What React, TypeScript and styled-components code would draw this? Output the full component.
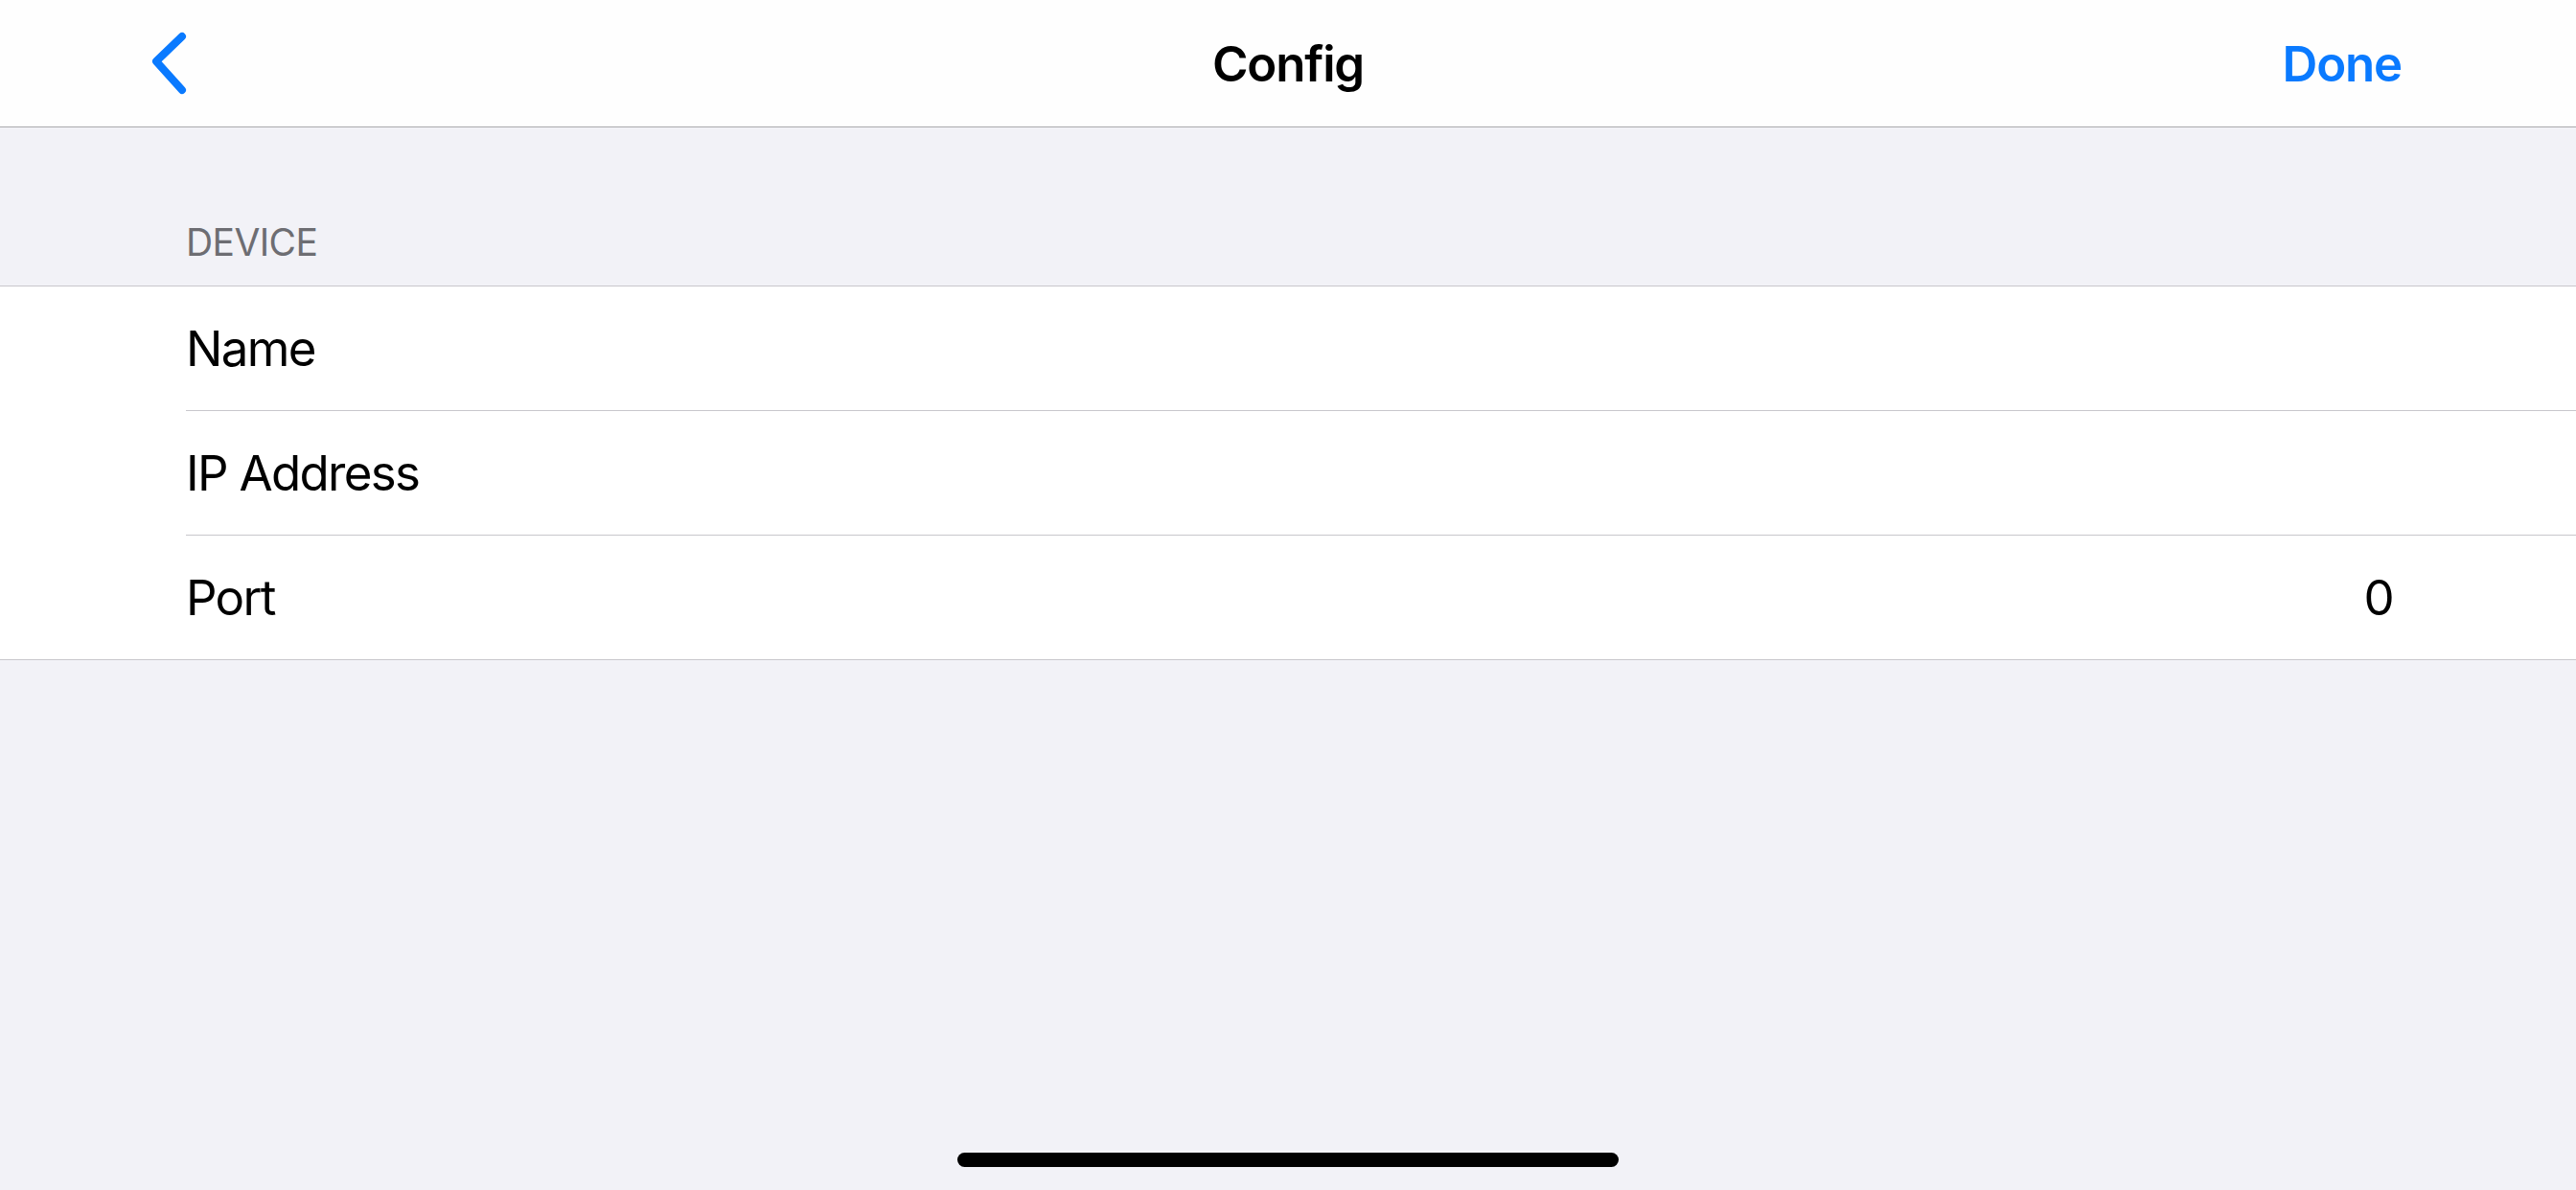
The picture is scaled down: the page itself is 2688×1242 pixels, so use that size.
import styled, { createGlobalStyle } from "styled-components";

const GlobalStyle = createGlobalStyle`
  html, body {
    margin: 0;
    padding: 0;
    background-color: #f2f2f7;
  }
  body {
    font-family: "Inter", "Liberation Sans", sans-serif;
    -webkit-font-smoothing: antialiased;
  }
`;

const Screen = styled.div`
  display: flex;
  flex-direction: column;
  min-height: 100vh;
  background-color: #f2f2f7;
`;

const NavBar = styled.header`
  display: grid;
  grid-template-columns: 1fr auto 1fr;
  align-items: center;
  height: 132px;
  background-color: #fefefe;
  border-bottom: 1px solid #a9a9ad;
`;

const BackButton = styled.button`
  justify-self: start;
  display: flex;
  align-items: center;
  border: none;
  background: none;
  padding: 0 0 0 154px;
  cursor: pointer;
`;

const Title = styled.h1`
  margin: 0;
  font-size: 51px;
  font-weight: 600;
  letter-spacing: -1.2px;
  color: #000;
`;

const DoneButton = styled.button`
  justify-self: end;
  border: none;
  background: none;
  padding: 0 182px 0 0;
  font-family: inherit;
  font-size: 51px;
  font-weight: 600;
  letter-spacing: -1.2px;
  color: #0a7aff;
  cursor: pointer;
`;

const SectionHeader = styled.div`
  padding: 96px 0 22px 194px;
  font-size: 39px;
  line-height: 47px;
  letter-spacing: -0.6px;
  text-transform: uppercase;
  color: #6d6d72;
`;

const Group = styled.div`
  display: flex;
  flex-direction: column;
  background-color: #fff;
  border-top: 1px solid #c8c7cc;
  border-bottom: 1px solid #c8c7cc;
`;

const Row = styled.div`
  padding-left: 194px;
  &:not(:last-child) > div {
    border-bottom: 1px solid #c8c7cc;
  }
`;

const RowInner = styled.div`
  display: flex;
  align-items: center;
  justify-content: space-between;
  height: 129px;
  padding-right: 191px;
  font-size: 51px;
  letter-spacing: -1.7px;
  color: #000;
`;

const Value = styled.span`
  color: #000;
`;

const Spacer = styled.div`
  flex: 1;
`;

const HomeIndicator = styled.div`
  align-self: center;
  width: 690px;
  height: 15px;
  margin-bottom: 24px;
  border-radius: 8px;
  background-color: #000;
`;

type Field = {
  label: string;
  value?: string;
};

const fields: Field[] = [
  { label: "Name" },
  { label: "IP Address" },
  { label: "Port", value: "0" },
];

function Chevron() {
  return (
    <svg width="44" height="66" viewBox="0 0 44 66">
      <polyline
        points="36,5 9,31 36,61"
        fill="none"
        stroke="#0a7aff"
        strokeWidth="8"
        strokeLinecap="round"
        strokeLinejoin="round"
      />
    </svg>
  );
}

export default function App() {
  return (
    <>
      <GlobalStyle />
      <Screen>
        <NavBar>
          <BackButton aria-label="Back">
            <Chevron />
          </BackButton>
          <Title>Config</Title>
          <DoneButton>Done</DoneButton>
        </NavBar>
        <SectionHeader>Device</SectionHeader>
        <Group>
          {fields.map((f) => (
            <Row key={f.label}>
              <RowInner>
                <span>{f.label}</span>
                {f.value && <Value>{f.value}</Value>}
              </RowInner>
            </Row>
          ))}
        </Group>
        <Spacer />
        <HomeIndicator />
      </Screen>
    </>
  );
}
